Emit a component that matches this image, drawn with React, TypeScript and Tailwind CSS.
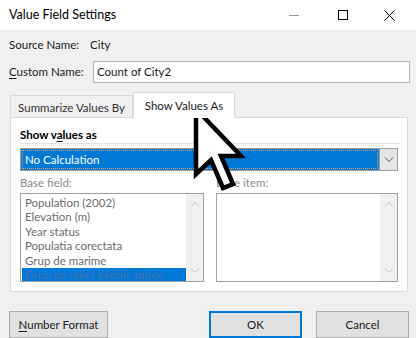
import React from "react";

const font = { fontFamily: 'Lato, "Noto Sans", Arial, sans-serif' };

const items = [
  "Population (2002)",
  "Elevation (m)",
  "Year status",
  "Populatia corectata",
  "Grup de marime",
  "Grup de relief definit adhoc",
];

function Chevron({ up }: { up?: boolean }) {
  return (
    <svg width="10" height="6" viewBox="0 0 10 6" className="block">
      <path
        d={up ? "M1 5.5 L5 1.5 L9 5.5" : "M1 0.5 L5 4.5 L9 0.5"}
        fill="none"
        stroke="currentColor"
        strokeWidth="1"
      />
    </svg>
  );
}

function ListBox({ rows }: { rows: string[] }) {
  return (
    <div className="flex h-[89px] border border-[#a0a0a0] bg-white">
      <div className="flex-1 overflow-hidden pt-[2px] pl-[1px]">
        {rows.map((r, i) => (
          <div
            key={r}
            className={
              i === rows.length - 1
                ? "h-[14.4px] pl-[3px] text-[11.5px] leading-[14.4px] bg-[#0078d7] text-[#4a70b0] whitespace-nowrap"
                : "h-[14.4px] pl-[3px] text-[11.5px] leading-[14.4px] text-[#6d6d6d] whitespace-nowrap"
            }
          >
            {r}
          </div>
        ))}
      </div>
      <div className="flex w-[17px] shrink-0 flex-col items-center justify-between bg-[#f0f0f0] py-[7px] text-[#c2c2c2]">
        <Chevron up />
        <Chevron />
      </div>
    </div>
  );
}

function Cursor() {
  return (
    <svg
      width="56"
      height="90"
      viewBox="0 0 56 90"
      className="pointer-events-none absolute left-[193px] top-[106px]"
    >
      <path
        d="M3 3 L3 68 L18 54 L30 82 L40 78 L28 50 L48 50 Z"
        fill="white"
        stroke="black"
        strokeWidth="4.5"
        strokeLinejoin="miter"
      />
    </svg>
  );
}

export default function App() {
  return (
    <div
      className="relative h-[338px] w-[416px] overflow-hidden bg-[#f0f0f0] text-[11.5px] text-[#1a1a1a]"
      style={font}
    >
      {/* title bar */}
      <div className="flex h-[30px] items-center bg-white pl-[9px]">
        <span className="text-[12.5px] text-black">Value Field Settings</span>
        <div className="ml-auto flex h-full items-center">
          <div className="flex w-[49px] justify-center">
            <div className="mt-[1px] h-px w-[10px] bg-[#9a9a9a]" />
          </div>
          <div className="flex w-[49px] justify-center">
            <div className="h-[10px] w-[10px] border border-black" />
          </div>
          <div className="flex w-[49px] justify-center pr-[4px]">
            <svg width="11" height="11" viewBox="0 0 11 11">
              <path d="M0.5 0.5 L10.5 10.5 M10.5 0.5 L0.5 10.5" stroke="black" strokeWidth="1" />
            </svg>
          </div>
        </div>
      </div>

      {/* names */}
      <div className="mt-[5px] flex h-[20px] items-center pl-[9px]">
        <span className="w-[81px] shrink-0">Source Name:</span>
        <span>City</span>
      </div>
      <div className="mt-[6px] flex items-center pl-[9px]">
        <span className="w-[84px] shrink-0">
          <span className="underline underline-offset-2">C</span>ustom Name:
        </span>
        <div className="flex h-[22px] w-[317px] items-center border border-[#b4b4b4] bg-white pl-[3px]">
          Count of City2
        </div>
      </div>

      {/* tabs */}
      <div className="mt-[9px] flex h-[25px] items-end pl-[10px]">
        <div className="flex h-[22px] w-[123px] items-center justify-center border border-b-0 border-[#d9d9d9] bg-[#f0f0f0] pt-[2px] text-[#333] whitespace-nowrap">
          Summarize Values By
        </div>
        <div className="relative z-10 -mb-px flex h-[26px] w-[102px] items-center justify-center border border-b-0 border-[#d9d9d9] bg-white text-[#1a1a1a] whitespace-nowrap">
          Show Values As
        </div>
      </div>

      {/* panel */}
      <div className="ml-[10px] h-[175px] w-[398px] border border-[#d9d9d9] bg-white px-[9px] pt-[8px]">
        <div className="h-[17px] font-bold leading-[17px] text-black">
          Show v<span className="underline underline-offset-2">a</span>lues as
        </div>
        <div className="h-px w-[380px] bg-[#e3e3e3]" />
        <div className="mt-[4px] flex h-[23px] w-[378px] border border-[#a0a0a0] bg-[#0078d7]">
          <div className="m-[1px] flex flex-1 items-center border border-dotted border-[#e8a060] pl-[2px] text-white">
            No Calculation
          </div>
          <div className="flex w-[18px] items-center justify-center border-l border-[#a0a0a0] bg-[#e5e5e5] text-[#555]">
            <Chevron />
          </div>
        </div>
        <div className="mt-[3px] flex h-[18px] items-center text-[#8c8c8c]">
          <span className="w-[196px] shrink-0">Base field:</span>
          <span>Base item:</span>
        </div>
        <div className="mt-[1px] flex gap-[12px]">
          <div className="w-[184px]">
            <ListBox rows={items} />
          </div>
          <div className="w-[182px]">
            <ListBox rows={[]} />
          </div>
        </div>
      </div>

      {/* buttons */}
      <div className="mt-[19px] flex pl-[9px]">
        <button className="h-[27px] w-[99px] border border-[#adadad] bg-[#e1e1e1] text-[#1a1a1a]">
          <span className="underline underline-offset-2">N</span>umber Format
        </button>
        <button className="ml-[101px] h-[27px] w-[93px] border-2 border-[#0078d7] bg-[#e1e1e1] text-[#1a1a1a]">
          OK
        </button>
        <button className="ml-[14px] h-[27px] w-[93px] border border-[#adadad] bg-[#e1e1e1] text-[#1a1a1a]">
          Cancel
        </button>
      </div>

      <Cursor />
    </div>
  );
}
